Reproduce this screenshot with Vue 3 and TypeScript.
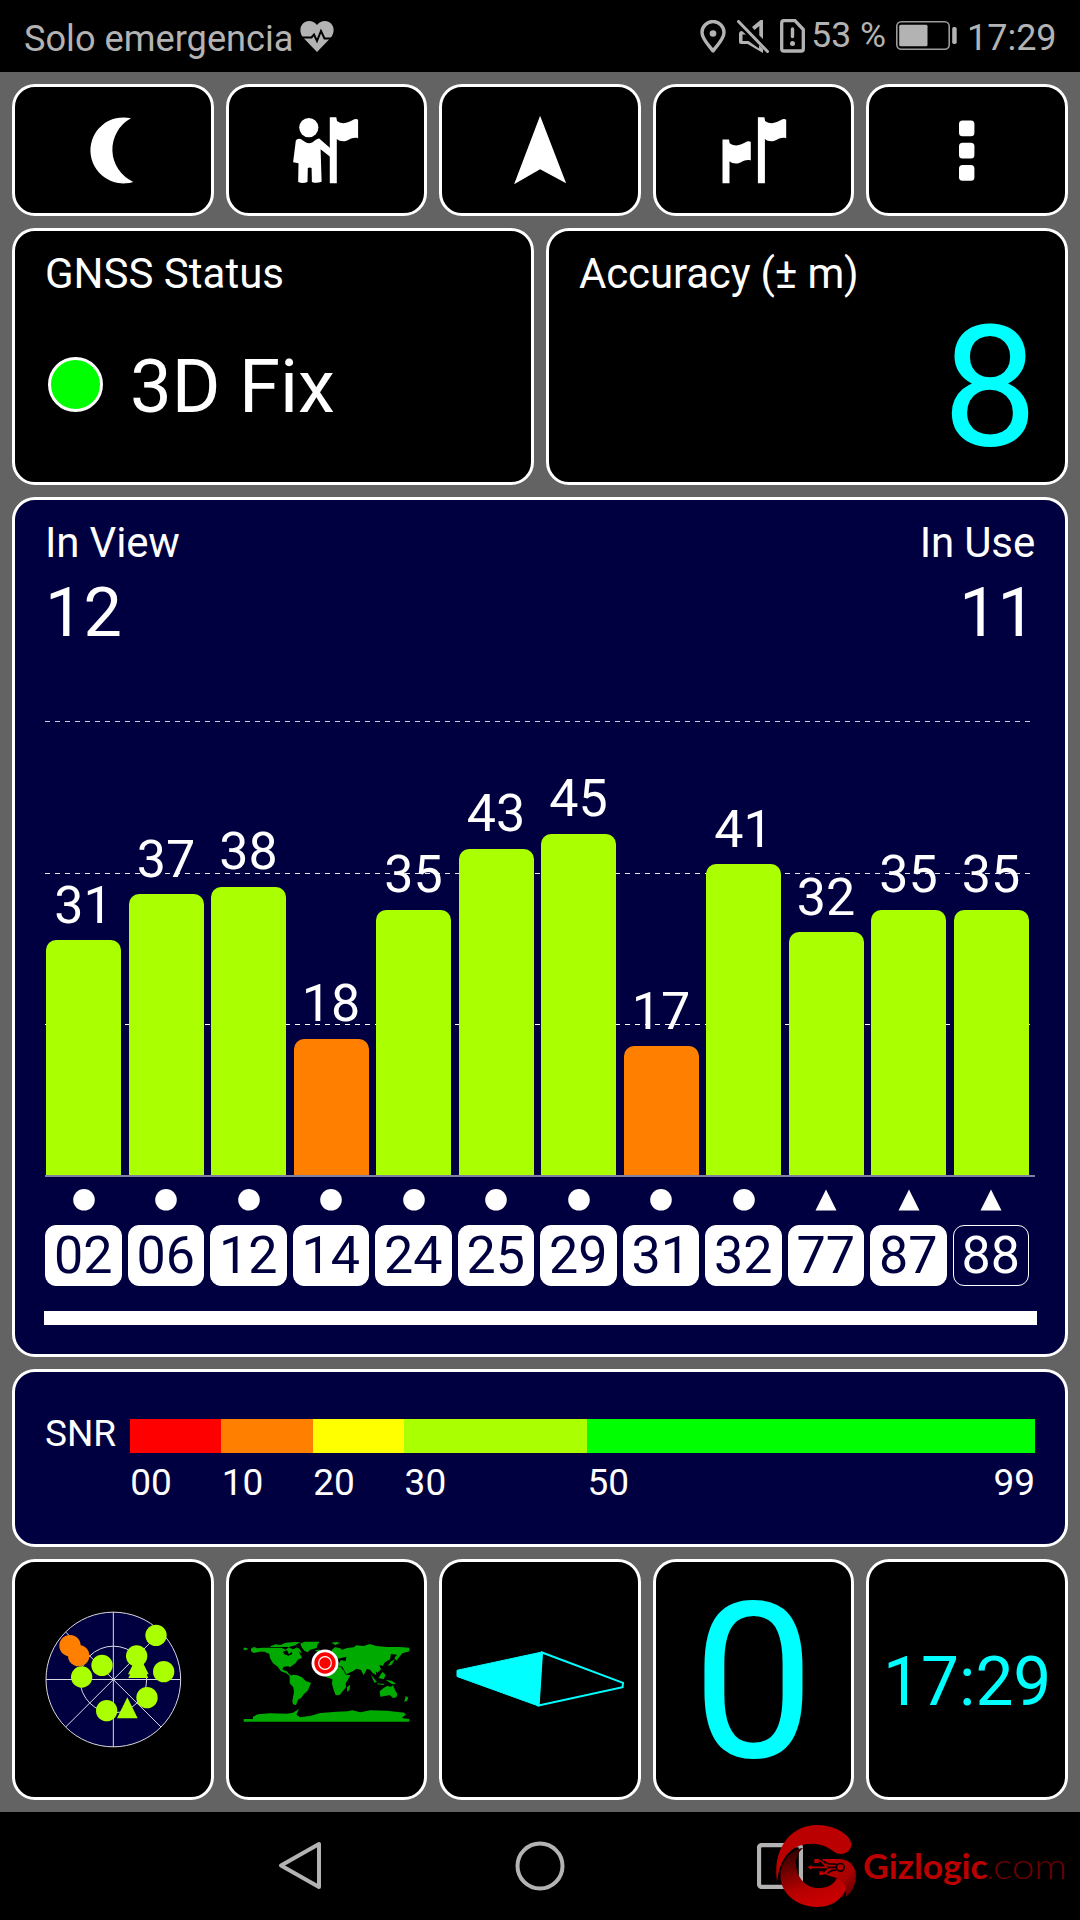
<script setup lang="ts">
interface Satellite {
  id: string
  snr: number
  shape: 'circle' | 'triangle'
  used: boolean
}

const satellites: Satellite[] = [
  { id: '02', snr: 31, shape: 'circle', used: true },
  { id: '06', snr: 37, shape: 'circle', used: true },
  { id: '12', snr: 38, shape: 'circle', used: true },
  { id: '14', snr: 18, shape: 'circle', used: true },
  { id: '24', snr: 35, shape: 'circle', used: true },
  { id: '25', snr: 43, shape: 'circle', used: true },
  { id: '29', snr: 45, shape: 'circle', used: true },
  { id: '31', snr: 17, shape: 'circle', used: true },
  { id: '32', snr: 41, shape: 'circle', used: true },
  { id: '77', snr: 32, shape: 'triangle', used: true },
  { id: '87', snr: 35, shape: 'triangle', used: true },
  { id: '88', snr: 35, shape: 'triangle', used: false },
]

const scale = [
  { from: '00', span: 10, color: '#ff0000' },
  { from: '10', span: 10, color: '#ff8000' },
  { from: '20', span: 10, color: '#ffff00' },
  { from: '30', span: 20, color: '#aaff00' },
  { from: '50', span: 49, color: '#00ff00', to: '99' },
]

const PX_PER_DB = 7.597
const barHeight = (snr: number) => `${(snr * PX_PER_DB).toFixed(1)}px`
const barColor = (snr: number) => (snr < 20 ? '#ff8000' : '#aaff00')

const skyDots: [number, number, string][] = [
  [209, 286, '#ff8000'],
  [235, 316, '#ff8000'],
  [305, 345, '#aaff00'],
  [244, 380, '#aaff00'],
  [319, 481, '#aaff00'],
  [440, 442, '#aaff00'],
  [490, 364, '#aaff00'],
  [467, 255, '#aaff00'],
  [409, 317, '#aaff00'],
]
</script>

<template>
  <div class="screen">
    <header class="status">
      <span class="carrier">Solo emergencia</span>
      <svg class="heart" width="34" height="31" viewBox="0 0 34 31">
        <path d="M17 31 3 16.500C-1 11-.5 4 5 1 9.500-1 14 .5 17 4 20 .5 24.500-1 29 1 34.500 4 35 11 31 16.500Z" fill="#b3b3b3" />
        <path d="M0 16.500h11.500l2.500-3 3 6.500 4-10 3.500 7.500H34" fill="none" stroke="#000" stroke-width="2" />
      </svg>
      <span class="spacer"></span>
      <svg class="pin" width="26" height="33" viewBox="0 0 26 33">
        <path d="M13 31C9 25.500 2 19 2 12.500a11 11 0 0 1 22 0C24 19 17 25.500 13 31Z" fill="none" stroke="#b3b3b3" stroke-width="3.400" stroke-linejoin="round" />
        <circle cx="13" cy="13.500" r="3.300" fill="#b3b3b3" />
      </svg>
      <svg class="mute" width="32" height="33" viewBox="0 0 32 33">
        <path d="M15 7 23.500 0H26V19L22.300 15.500V6L17.500 10ZM2 14Q2 11 5 11L9 14.500H5.500V21H11.500L22 28.500V25L26 29V33L10.500 24H4Q2 24 2 22Z" fill="#b3b3b3" />
        <path d="M1.500 1.500 30.500 31.500" stroke="#b3b3b3" stroke-width="3" stroke-linecap="round" />
      </svg>
      <svg class="sim" width="25" height="34" viewBox="0 0 25 34">
        <path d="M4 1.700H15L23.300 10.500V30q0 2-2 2H4q-2.300 0-2.300-2V4q0-2.300 2.300-2.300Z" fill="none" stroke="#b3b3b3" stroke-width="3.300" />
        <path d="M12.500 10v7.500" stroke="#b3b3b3" stroke-width="3.400" stroke-linecap="round" />
        <circle cx="12.500" cy="24.500" r="2.500" fill="#b3b3b3" />
      </svg>
      <span class="percent">53 %</span>
      <svg class="battery" width="61" height="29" viewBox="0 0 61 29">
        <rect x=".8" y=".8" width="52.400" height="27.400" rx="4.500" fill="none" stroke="#9a9a9a" stroke-width="1.600" />
        <rect x="3.200" y="3.700" width="28.300" height="21.600" rx="1.500" fill="#b3b3b3" />
        <rect x="56.200" y="6" width="4.500" height="17" rx="1.800" fill="#b3b3b3" />
      </svg>
      <span class="clock">17:29</span>
    </header>

    <main class="panels">
      <nav class="tiles">
        <button class="panel tile">
          <svg viewBox="15 86.700 195.600 126"><path d="M131 118A33 33 0 1 0 133.300 181.600A35.500 35.500 0 0 1 131 118Z" fill="#fff" /></svg>
        </button>
        <button class="panel tile">
          <svg viewBox="229.400 86.700 195.600 126" fill="#fff">
            <circle cx="309.200" cy="127.300" r="9.600" />
            <path d="M296.200 140.500Q297 138.500 299.500 138.500C303 138.500 305 143 309.500 143 314 143 316 138.300 319.600 138.300L330.500 147.700V156.500L321 149 322 181.500Q317 183.500 312.300 181.700L312 167.700Q310 166.500 308.200 167.700L307.900 181.700Q303 183.500 298.600 181.700L298.900 162.900 293.500 162Z" />
            <path d="M330.200 117h6.500l.7 3.700C343 124.500 348 123 354.700 119Q357 118 358.500 119.500V137.900C352 136 349 141 343.700 141 341 141 339 140 337.200 138.700V183h-7Z" />
          </svg>
        </button>
        <button class="panel tile">
          <svg viewBox="441.900 86.700 195.600 126"><path d="M540 115.500 566 183 540 169 514 184Z" fill="#fff" /></svg>
        </button>
        <button class="panel tile">
          <svg viewBox="656.400 86.700 195.600 126" fill="#fff">
            <path d="M758.300 117h6.500l.7 3.700c5.600 3.800 10.600 2.300 17.300-1.700q2.300-1 3.800.5v18.400c-6.500-1.900-9.500 3.100-14.800 3.100-2.700 0-4.700-1-6.500-2.300V183h-7Z" />
            <path d="M722.900 139.300h6.500l.7 3.700c5.600 3.800 10.600 2.300 17.300-1.700q2.300-1 3.800.5v18.400c-6.500-1.900-9.500 3.100-14.800 3.100-2.700 0-4.700-1-6.500-2.300V183h-7Z" />
          </svg>
        </button>
        <button class="panel tile">
          <svg viewBox="869.400 86.700 195.600 126" fill="#fff">
            <rect x="959.400" y="120.200" width="15.400" height="15.800" rx="3.500" />
            <rect x="959.400" y="142.500" width="15.400" height="15.800" rx="3.500" />
            <rect x="959.400" y="164.700" width="15.400" height="15.800" rx="3.500" />
          </svg>
        </button>
      </nav>

      <section class="pair">
        <div class="panel info">
          <div class="label">GNSS Status</div>
          <div class="fix"><span class="lamp"></span><span>3D Fix</span></div>
        </div>
        <div class="panel info">
          <div class="label tight">Accuracy (± m)</div>
          <div class="accuracy">8</div>
        </div>
      </section>

      <section class="panel blue chart">
        <div class="counts">
          <div><div class="label tight">In View</div><div class="count">12</div></div>
          <div class="right"><div class="label tight">In Use</div><div class="count">11</div></div>
        </div>
        <div class="plot">
          <svg class="grid" width="990" height="455" viewBox="0 0 990 455" stroke="#fff" stroke-dasharray="5 5">
            <path d="M0 .5H986" opacity=".8" />
            <path d="M0 152.500H986" opacity=".9" />
            <path d="M0 303.500H986" />
          </svg>
          <div v-for="s in satellites" :key="s.id" class="col">
            <span class="snr">{{ s.snr }}</span>
            <span class="bar" :style="{ height: barHeight(s.snr), background: barColor(s.snr) }"></span>
          </div>
        </div>
        <div class="axis"></div>
        <div class="ids">
          <div v-for="s in satellites" :key="s.id" class="sat">
            <svg width="22" height="22" viewBox="0 0 22 22" fill="#fff">
              <circle v-if="s.shape === 'circle'" cx="11" cy="10.800" r="10.800" />
              <path v-else d="M11 .5 21.500 21.500H.5Z" />
            </svg>
            <span class="pill" :class="{ idle: !s.used }">{{ s.id }}</span>
          </div>
        </div>
        <div class="scroll"></div>
      </section>

      <section class="panel blue legend">
        <span class="snr-label">SNR</span>
        <div class="scale">
          <div v-for="z in scale" :key="z.from" class="zone" :style="{ flexGrow: z.span }">
            <div class="swatch" :style="{ background: z.color }"></div>
            <div class="ticks"><span>{{ z.from }}</span><span v-if="z.to">{{ z.to }}</span></div>
          </div>
        </div>
      </section>

      <section class="tiles">
        <div class="panel tile">
          <svg width="137" height="137" viewBox="134 182 411 411" class="sky">
            <circle cx="339" cy="387.500" r="202" fill="#000040" />
            <g fill="none" stroke="#fff" stroke-width="3" opacity=".85">
              <circle cx="339" cy="387.500" r="202" />
              <circle cx="339" cy="387.500" r="100" />
              <path d="M137 387.500H541M339 185V590M196 530 482 245M196 245 482 530" />
            </g>
            <circle v-for="(d, i) in skyDots" :key="i" :cx="d[0]" :cy="d[1]" r="32" :fill="d[2]" />
            <path d="M414 310 445 372H383ZM414 322 444 383H384ZM381 441 412 504H350Z" fill="#aaff00" />
          </svg>
        </div>
        <div class="panel tile">
          <svg width="168" height="84" viewBox="68 265 504 252" fill="#00aa00" class="world">
            <path d="M92 294 100 289 112 293 125 291H182L196 297 205 290 218 296 228 291 236 304 245 322 232 327 226 337 214 346 208 350 204 347 190 348 186 356 194 360 200 362 206 370 214 376 208 376 198 368 182 362 172 348 158 338 149 322 147 310 132 303H118L100 307 92 302Z" />
            <path d="M188 303 200 299 206 311 214 303 216 310 204 315 192 311Z" fill="#000" />
            <path d="M70 291h6l8 4-8 3-6 1ZM150 287l16-6 14 2 16-7 26-2 18 1-16 9-18 5H150ZM226 290l12 4 6 14-8-4ZM240 279 252 273H298L291 283 289 292 270 297 262 305 252 300 244 290Z" />
            <path d="M208 376 218 372 232 374 247 381 256 391 272 396 268 407 262 420 250 431 243 441 233 447 227 463 218 461 216 452 221 424 219 410 208 398Z" />
            <path d="M284 299l12-2 4 3-10 3ZM333 276l16-2 10 3-14 6ZM334 298 344 290 358 292 366 297 380 292 400 290 408 284 430 286 448 280 468 286 500 289H536L567 291V302L546 308 536 320 528 330 522 322 530 312 512 310 509 326 492 336 488 346 477 343 482 356 472 366 466 362 468 374 456 366 450 358 440 354 430 374 422 358 408 354 400 360 378 371 366 348 356 346 354 340 362 328 376 332 378 318 354 324 348 318 342 316 336 308Z" />
            <path d="M312 372 334 366 346 346 360 348 370 360 376 372 390 374 382 388 376 398 377 410 368 420 358 433 346 434 340 418 335 400 336 386 318 380Z" />
            <path d="M380 410 390 402 387 418 381 424ZM452 372 470 394 462 396ZM474 382l12-18 10 8-6 14ZM470 398l22 2-2 3-18-2ZM496 388l18 2 14 10-12 1ZM478 422 490 412 500 406 512 408 518 404 524 418 531 430 528 440 518 442 508 433 494 436 480 438ZM556 436l8 5-4 10-8 2ZM512 332l12-6-10 16-12 4Z" />
            <path d="M70 505H98L98 498 112 491 150 488 200 489 218 486 236 475 228 492 240 500 272 495 300 487 350 483 382 482 396 479 420 485 450 479 500 480 552 486 556 492 544 502 567 505V513H70Z" />
            <circle cx="314" cy="337" r="40.500" fill="#fff" />
            <circle cx="314" cy="337" r="32" fill="#f00" />
            <circle cx="314" cy="337" r="19" fill="#f00" stroke="#fff" stroke-width="3.500" />
          </svg>
        </div>
        <div class="panel tile">
          <svg width="172" height="58" viewBox="454 1650 172 58" class="needle">
            <path d="M457 1670.300V1676.500L538.600 1706 542 1652Z" fill="#0ff" stroke="#0ff" />
            <path d="M542 1652.500 623 1682.800 622.600 1687.200 538.600 1705.500Z" fill="none" stroke="#0ff" stroke-width="2" />
          </svg>
        </div>
        <div class="panel tile speed">0</div>
        <div class="panel tile time">17:29</div>
      </section>
    </main>

    <footer class="navbar">
      <svg width="46" height="50" viewBox="0 0 46 50"><path d="M42 3V46L4 24.500Z" fill="none" stroke="#b3b3b3" stroke-width="4" stroke-linejoin="round" /></svg>
      <svg width="50" height="50" viewBox="0 0 50 50"><circle cx="25" cy="25" r="22.500" fill="none" stroke="#b3b3b3" stroke-width="4" /></svg>
      <svg width="46" height="46" viewBox="0 0 46 46"><rect x="2" y="2" width="42" height="42" rx="3" fill="none" stroke="#b3b3b3" stroke-width="4.300" /></svg>
      <svg class="watermark" width="300" height="90" viewBox="100 60 900 270">
        <defs>
          <linearGradient id="swirl" x1="0" y1="0" x2=".3" y2="1">
            <stop offset="0" stop-color="#200000" /><stop offset=".75" stop-color="#b80000" /><stop offset="1" stop-color="#c80000" />
          </linearGradient>
          <linearGradient id="tail" x1="0" y1="0" x2="1" y2="1">
            <stop offset="0" stop-color="#c00000" /><stop offset=".6" stop-color="#a80000" /><stop offset="1" stop-color="#500000" />
          </linearGradient>
        </defs>
        <path d="M112 246C98 150 150 75 232 75 272 75 312 92 329 116 345 142 325 162 303 162 278 160 268 131 215 131 150 131 120 180 112 246Z" fill="#ba0000" />
        <path d="M191 143C150 150 118 190 123 238 130 290 180 321 232 321 285 321 312 290 322 262 314 240 300 234 290 236 280 258 255 265 232 264 195 262 166 225 169 185 171 165 180 152 191 143Z" fill="url(#swirl)" />
        <path d="M247 177H300C330 178 350 200 349 230 347 260 335 278 318 291 326 250 305 238 278 230 262 226 256 222 252 218L266 204Z" fill="url(#tail)" />
        <path d="M212 202H262M230 183H244L260 200M244 220H258L268 208" fill="none" stroke="#b80000" stroke-width="5" />
        <path d="M203 202 216 195V209ZM224 177h13v12h-13ZM239 214h11v11h-11Z" fill="#b80000" />
        <g fill="none" stroke="#100000" stroke-width="5">
          <path d="M262 202H289M252 184 266 192H284L292 194M262 220 276 212 290 210" />
          <circle cx="302" cy="202" r="11.500" />
        </g>
        <text x="370" y="236" textLength="374" lengthAdjust="spacingAndGlyphs" font-size="101" font-weight="700" fill="#ba0000">Gizlogic</text>
        <text x="741" y="236" font-size="90" font-weight="300" fill="#6c0000">.</text>
        <text x="760" y="236" textLength="222" lengthAdjust="spacingAndGlyphs" font-size="106" font-weight="300" fill="#6c0000">com</text>
      </svg>
    </footer>
  </div>
</template>

<style>
body {
  margin: 0;
  background: #000;
}
</style>

<style scoped>
.screen {
  width: 1080px;
  height: 1920px;
  box-sizing: border-box;
  display: flex;
  flex-direction: column;
  background: #636363;
  color: #fff;
  font-family: Roboto, "Liberation Sans", sans-serif;
  overflow: hidden;
}
.status {
  height: 72px;
  flex: none;
  box-sizing: border-box;
  padding: 0 23.4px 0 24px;
  display: flex;
  align-items: flex-start;
  background: #000;
  color: #b3b3b3;
  font-size: 36px;
  line-height: 77px;
}
.carrier { font-size: 36.2px; }
.spacer { flex: 1; }
.heart { margin: 21px 0 0 6px; }
.pin { margin: 20px 11px 0 0; }
.mute { margin: 20px 11px 0 0; }
.sim { margin: 19px 6px 0 0; }
.percent { font-size: 35.5px; line-height: 70px; }
.battery { margin: 21px 10px 0 10px; }

.panels {
  flex: none;
  height: 1740px;
  box-sizing: border-box;
  padding: 12px;
  display: grid;
  grid-template-rows: 132px 257.4px 859.2px 178.2px 241.2px;
  gap: 12px;
}
.panel {
  box-sizing: border-box;
  border: 3px solid #fff;
  border-radius: 23px;
  background: #000;
  min-width: 0;
}
.blue { background: #000040; }
.tiles {
  display: grid;
  grid-template-columns: repeat(5, 1fr);
  gap: 12px;
}
.tile {
  display: flex;
  align-items: center;
  justify-content: center;
  padding: 0;
}
button.tile svg {
  width: 100%;
  height: 100%;
}
.pair {
  display: grid;
  grid-template-columns: 1fr 1fr;
  gap: 12px;
}
.info { padding: 18px 30px 0; }
.label {
  font-size: 42px;
  line-height: 50px;
}
.tight { letter-spacing: -0.16px; }
.fix {
  margin-top: 44px;
  display: flex;
  align-items: center;
  font-size: 74.3px;
  line-height: 88px;
}
.lamp {
  width: 55px;
  height: 55px;
  box-sizing: border-box;
  margin: 0 27px 6px 3px;
  border: 3px solid #fff;
  border-radius: 50%;
  background: #0f0;
}
.accuracy {
  margin-right: -2.4px;
  text-align: right;
  color: #0ff;
  font-size: 169px;
  line-height: 177px;
}

.chart { padding: 18px 30px 0; }
.counts {
  display: flex;
  justify-content: space-between;
}
.right { text-align: right; }
.right .count { margin-right: -1px; }
.count {
  margin-top: 5px;
  font-size: 68.4px;
  line-height: 80px;
}
.plot {
  position: relative;
  margin-top: 68px;
  height: 454px;
  display: flex;
  align-items: flex-end;
}
.grid {
  position: absolute;
  left: 0;
  top: 0;
}
.col {
  position: relative;
  width: 82.5px;
  display: flex;
  flex-direction: column;
}
.snr {
  width: 77px;
  margin-bottom: 8.4px;
  text-align: center;
  font-size: 52px;
  line-height: 52px;
}
.bar {
  width: 75.2px;
  margin-left: 1px;
  border-radius: 10px 10px 0 0;
}
.axis {
  height: 2px;
  background: #8080a0;
}
.ids {
  display: flex;
  margin-top: 12px;
}
.sat {
  width: 82.5px;
  display: flex;
  flex-direction: column;
}
.sat svg { margin-left: 27.8px; }
.pill {
  width: 76.5px;
  height: 61px;
  margin-top: 14px;
  box-sizing: border-box;
  border: 1.5px solid #fff;
  border-radius: 11px;
  background: #fff;
  color: #000040;
  text-align: center;
  font-size: 52px;
  line-height: 60px;
}
.idle {
  background: none;
  color: #fff;
}
.scroll {
  height: 14px;
  margin: 25px -2px 0 -1px;
  background: #fff;
}

.legend {
  padding: 47.6px 30px 0;
  display: flex;
  align-items: flex-start;
  font-size: 37px;
}
.snr-label {
  width: 84.8px;
  line-height: 29px;
}
.scale {
  flex: 1;
  display: flex;
}
.zone { flex: 1 1 0; }
.swatch { height: 34px; }
.ticks {
  margin-top: 7px;
  padding-left: 0.5px;
  display: flex;
  justify-content: space-between;
  line-height: 45px;
}
.sky { margin-left: 1px; }
.world { margin: 3px 0 0 2px; }
.speed {
  padding-top: 6px;
  color: #0ff;
  font-size: 218px;
  line-height: 229px;
}
.time {
  padding-top: 5px;
  color: #0ff;
  font-size: 67.6px;
}

.navbar {
  position: relative;
  flex: none;
  height: 108px;
  display: flex;
  align-items: center;
  justify-content: space-between;
  box-sizing: border-box;
  padding: 0 277px 0 277px;
  background: #000;
}
.watermark {
  position: absolute;
  left: 773px;
  top: 8px;
  font-family: Lato, "Open Sans", sans-serif;
}
</style>
